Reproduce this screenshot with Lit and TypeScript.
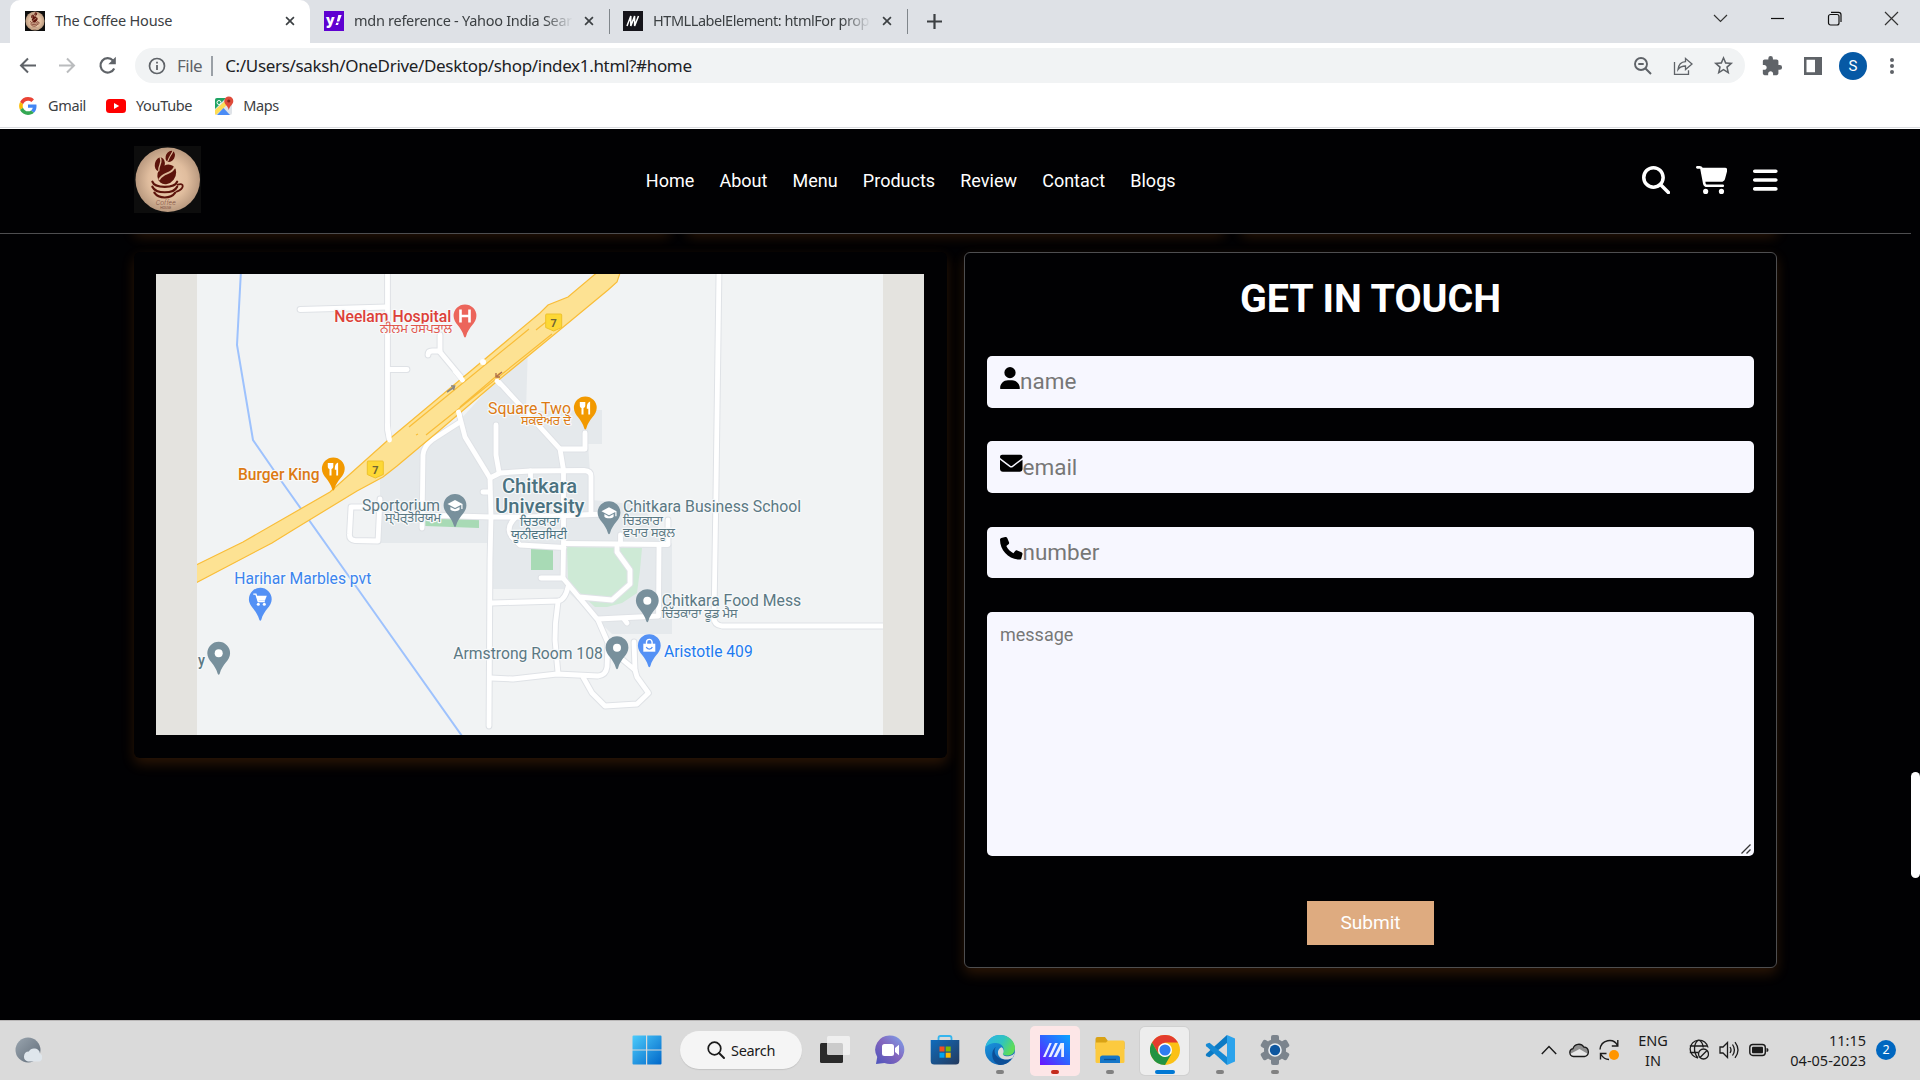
import { LitElement, html, css, svg } from "lit";
import { customElement } from "lit/decorators.js";

const closeIcon = html`<svg class="close" viewBox="0 0 12 12"><path d="M1.3 1.3 10.7 10.7M10.7 1.3 1.3 10.7" fill="none" stroke="#3c4043" stroke-width="2"/></svg>`;

const coffeeLogo = html`<svg class="logo" viewBox="0 0 68 68" preserveAspectRatio="none">
  <defs><radialGradient id="cg"><stop offset="0" stop-color="#efceb0"/><stop offset=".6" stop-color="#e0bd9e"/><stop offset="1" stop-color="#b9997f"/></radialGradient></defs>
  <rect width="68" height="68" fill="#0d0d0d"/>
  <circle cx="34" cy="34" r="32.5" fill="url(#cg)"/>
  <g fill="#5c130b">
    <ellipse cx="36.5" cy="10.5" rx="4.4" ry="6" transform="rotate(28 36.500 10.500)"/>
    <ellipse cx="26" cy="18.500" rx="5" ry="7" transform="rotate(12 26 18.500)"/>
    <ellipse cx="33" cy="28.500" rx="8.800" ry="10.500" transform="rotate(38 33 28.500)"/>
  </g>
  <g fill="none" stroke="#dcb898" stroke-linecap="round">
    <path d="M39 5.500C37 10 36 9.500 34 15.500" stroke-width="1.100"/>
    <path d="M26.500 12C29 17 24.500 19 25 25" stroke-width="1.300"/>
    <path d="M40.500 22C37 29 30 26 25.500 33.500" stroke-width="2"/>
  </g>
  <g fill="none" stroke="#5c130b" stroke-width="2.200" stroke-linecap="round">
    <path d="M18.500 36C21 43 41 43 43.500 36"/>
    <path d="M18.500 41C22 48.500 40 48.500 43.500 41"/>
    <path d="M20.500 47C25 53.500 37 53.500 41.500 47"/>
    <path d="M44 39C51 36.500 51 43 43 46" stroke-width="1.800"/>
  </g>
  <g fill="#7b4a3c" font-family="Roboto, sans-serif" text-anchor="middle">
    <text x="32" y="59" font-size="7.500" font-style="italic" font-weight="300" textLength="20" lengthAdjust="spacingAndGlyphs">Coffee</text>
    <text x="32" y="63.500" font-size="3.500">HOUSE</text>
  </g>
</svg>`;

@customElement("browser-bar")
class BrowserBar extends LitElement {
  static styles = css`
    :host { display: block; height: 129px; background: #fff; font: 14.5px "Noto Sans", "Open Sans", sans-serif; color: #3c4043; }
    svg { display: block; flex: none; }
    .strip { height: 43px; background: #dee1e6; display: flex; align-items: flex-end; }
    .tab { height: 43px; display: flex; align-items: center; box-sizing: border-box; padding: 0 16px 1px 14px; white-space: nowrap; }
    .active { width: 300px; margin-left: 10px; background: #fff; border-radius: 10px 10px 0 0; padding-left: 15px; }
    .tab .logo { width: 20px; height: 20px; }
    .fav { width: 20px; height: 20px; }
    .title { flex: 1; margin: 0 9px 2px 10px; letter-spacing: -0.22px; }
    .fade { -webkit-mask-image: linear-gradient(90deg, #000 86%, transparent 99%); mask-image: linear-gradient(90deg, #000 86%, transparent 99%); }
    .close { width: 10px; height: 10px; margin-right: -1px; }
    .second { width: 299px; }
    .second .title { letter-spacing: -0.28px; }
    .third { width: 297px; padding-left: 13px; }
    .third .title { letter-spacing: -0.45px; }
    .sep { width: 1px; height: 25px; background: #80868b; align-self: center; }
    .plus { width: 15px; height: 15px; margin: 0 0 14px 19px; }
    .win { margin-left: auto; display: flex; align-items: center; gap: 42px; padding: 0 21px 7px 0; height: 36px; }
    .win svg { width: 15px; height: 15px; }
    .tools { height: 35px; padding: 5px 0; display: flex; align-items: center; color: #5f6368; }
    .navs { width: 135px; display: flex; gap: 19px; padding-left: 17px; box-sizing: border-box; }
    .navs svg { width: 21px; height: 21px; }
    .omni { flex: none; width: 1610px; height: 35px; box-sizing: border-box; border-radius: 18px; background: #f1f3f4; display: flex; align-items: center; padding: 0 12px; }
    .omni svg { width: 20px; height: 20px; }
    .file { font-size: 17px; letter-spacing: -0.5px; margin: 0 9px 1px 10px; }
    .bar { width: 2px; height: 20px; background: #9aa0a6; }
    .url { font-size: 17px; letter-spacing: -0.33px; color: #202124; margin: 0 auto 1px 12px; }
    .omni .acts { display: flex; gap: 20px; }
    .omni .star { width: 23px; height: 23px; margin: -1.5px; }
    .right { display: flex; align-items: center; padding-left: 16px; gap: 19px; }
    .right svg { width: 22px; height: 22px; }
    .avatar { width: 28px; height: 28px; border-radius: 50%; background: #0659a5; color: #fff; font: 15px/28px Roboto, sans-serif; text-align: center; margin: 0 -2px 0 -4px; }
    .marks { height: 40px; box-sizing: border-box; padding: 0 0 4px 18px; border-bottom: 1px solid #dadce0; display: flex; align-items: center; }
    .marks svg { width: 20px; height: 20px; }
    .marks span { letter-spacing: -0.35px; margin: 0 20px 1px 10px; }
    .marks .yt { margin-right: 22px; }
    .marks .yt + svg { margin-right: -1px; }
  `;
  render() {
    return html`
      <div class="strip">
        <div class="tab active">${coffeeLogo}<span class="title">The Coffee House</span>${closeIcon}</div>
        <div class="tab second">
          <svg class="fav" viewBox="0 0 20 20"><rect width="20" height="20" fill="#5f01d1"/><text x="2" y="14" fill="#fff" font-family="Open Sans, sans-serif" font-weight="800" font-size="14">y</text><path d="M14.300 4h3.400l-2.400 6.500h-2.500zM12.300 11.700h2.500l-.8 2.300h-2.500z" fill="#fff"/></svg>
          <span class="title fade">mdn reference - Yahoo India Sear</span>${closeIcon}
        </div>
        <div class="sep"></div>
        <div class="tab third">
          <svg class="fav" viewBox="0 0 20 20"><rect width="20" height="20" fill="#15141a"/><path d="M4 15 7.800 5V15L11.600 5V15L15.500 5" fill="none" stroke="#fff" stroke-width="1.500"/></svg>
          <span class="title fade">HTMLLabelElement: htmlFor prop</span>${closeIcon}
        </div>
        <div class="sep"></div>
        <svg class="plus" viewBox="0 0 15 15"><path d="M7.500 0v15M0 7.500h15" stroke="#3c4043" stroke-width="2.200"/></svg>
        <div class="win">
          <svg viewBox="0 0 15 15"><path d="m1 4 6.500 6.500L14 4" fill="none" stroke="#333" stroke-width="1.200"/></svg>
          <svg viewBox="0 0 15 15"><path d="M1 7.500h13" stroke="#111" stroke-width="1.200"/></svg>
          <svg viewBox="0 0 15 15"><rect x="1.500" y="3.500" width="10.500" height="10.500" rx="2" fill="none" stroke="#111" stroke-width="1.200"/><path d="M4 1.300h7.500a2.500 2.500 0 0 1 2.500 2.500V11" fill="none" stroke="#111" stroke-width="1.200"/></svg>
          <svg viewBox="0 0 15 15"><path d="m1 1 13 13M14 1 1 14" stroke="#333" stroke-width="1.200"/></svg>
        </div>
      </div>
      <div class="tools">
        <div class="navs">
          <svg viewBox="0 0 21 21"><path d="M19 10.500H4M11 3.500l-7 7 7 7" fill="none" stroke="#5f6368" stroke-width="2"/></svg>
          <svg viewBox="0 0 21 21"><path d="M2 10.500h15M10 3.500l7 7-7 7" fill="none" stroke="#babcbe" stroke-width="2"/></svg>
          <svg viewBox="0 0 21 21"><path d="M17.200 13.500A7.200 7.200 0 1 1 16 5.500" fill="none" stroke="#5f6368" stroke-width="2.200"/><path d="M18.800 1.800v7.500h-7.500z" fill="#5f6368"/></svg>
        </div>
        <div class="omni">
          <svg viewBox="0 0 20 20"><circle cx="10" cy="10" r="7.500" fill="none" stroke="#5f6368" stroke-width="1.700"/><path d="M10 9v5M10 5.800v1.800" stroke="#5f6368" stroke-width="1.800"/></svg>
          <span class="file">File</span><span class="bar"></span>
          <span class="url">C:/Users/saksh/OneDrive/Desktop/shop/index1.html?#home</span>
          <div class="acts">
            <svg viewBox="0 0 20 20"><circle cx="8" cy="8" r="6" fill="none" stroke="#5f6368" stroke-width="1.900"/><path d="m12.500 12.500 5.500 5.500M5.300 8h5.400" stroke="#5f6368" stroke-width="2"/></svg>
            <svg viewBox="0 0 20 20"><path d="M1.500 6v12.300h14v-4" fill="none" stroke="#5f6368" stroke-width="1.300"/><path d="M12.500 2.500 19 8l-6.500 5.500V10C9 10 6.800 11 5 13.500 5.500 9 8 6 12.500 5.700z" fill="none" stroke="#5f6368" stroke-width="1.300"/></svg>
            <svg class="star" viewBox="0 0 24 24"><path fill="#5f6368" d="m22 9.240-7.190-.62L12 2 9.190 8.630 2 9.240l5.460 4.730L5.820 21 12 17.270 18.180 21l-1.630-7.030L22 9.240zM12 15.400l-3.760 2.270 1-4.280-3.320-2.880 4.380-.38L12 6.100l1.710 4.040 4.380.38-3.320 2.880 1 4.280L12 15.400z"/></svg>
          </div>
        </div>
        <div class="right">
          <svg viewBox="0 0 24 24"><path fill="#5f6368" d="M20.500 11H19V7c0-1.100-.9-2-2-2h-4V3.500a2.500 2.500 0 0 0-5 0V5H4c-1.100 0-1.990.9-1.990 2v3.800H3.500c1.490 0 2.700 1.210 2.700 2.700s-1.210 2.700-2.700 2.700H2V20c0 1.100.9 2 2 2h3.800v-1.500c0-1.490 1.210-2.700 2.700-2.700s2.700 1.210 2.700 2.700V22H17c1.100 0 2-.9 2-2v-4h1.500a2.500 2.500 0 0 0 0-5z"/></svg>
          <svg viewBox="0 0 22 22"><path fill="#5f6368" fill-rule="evenodd" d="M2 2h18v18H2zM4.500 4.800v12.400h8.500V4.800z"/></svg>
          <span class="avatar">S</span>
          <svg viewBox="0 0 22 22"><g fill="#5f6368"><circle cx="8" cy="5" r="2"/><circle cx="8" cy="11" r="2"/><circle cx="8" cy="17" r="2"/></g></svg>
        </div>
      </div>
      <div class="marks">
        <svg viewBox="-3 -3 54 54"><path fill="#EA4335" d="M24 9.500c3.540 0 6.710 1.220 9.210 3.600l6.850-6.850C35.900 2.380 30.470 0 24 0 14.620 0 6.510 5.380 2.560 13.220l7.980 6.190C12.430 13.720 17.740 9.500 24 9.500z"/><path fill="#4285F4" d="M46.980 24.550c0-1.570-.15-3.090-.38-4.550H24v9.020h12.940c-.58 2.960-2.260 5.480-4.780 7.180l7.730 6c4.510-4.180 7.090-10.360 7.090-17.650z"/><path fill="#FBBC05" d="M10.530 28.590c-.48-1.450-.76-2.990-.76-4.590s.27-3.140.76-4.590l-7.980-6.190C.92 16.460 0 20.120 0 24c0 3.880.92 7.540 2.560 10.780l7.970-6.190z"/><path fill="#34A853" d="M24 48c6.480 0 11.930-2.130 15.890-5.810l-7.730-6c-2.150 1.450-4.920 2.300-8.160 2.300-6.260 0-11.570-4.220-13.470-9.910l-7.980 6.190C6.510 42.620 14.620 48 24 48z"/></svg>
        <span>Gmail</span>
        <svg viewBox="0 0 20 20"><rect y="3" width="20" height="14" rx="3.500" fill="#f00"/><path d="m8 7 5.200 3L8 13z" fill="#fff"/></svg>
        <span class="yt">YouTube</span>
        <svg viewBox="0 0 20 20"><rect x="1" y="2" width="17" height="17" rx="2" fill="#dfe3e8"/><path d="M3 2h9L1 13V4a2 2 0 0 1 2-2z" fill="#1fa463"/><path d="M1 14 13 3l3 3L2 19l-1-1z" fill="#fddc54"/><path d="M9.500 12 16 19H3z" fill="#4b8cf5"/><path d="M14.800.5a4.500 4.500 0 0 1 4.500 4.500c0 3.500-3.500 4.500-4.500 9-1-4.500-4.500-5.500-4.500-9a4.500 4.500 0 0 1 4.500-4.500z" fill="#df4b3a"/><circle cx="14.800" cy="5" r="1.600" fill="#8c2619"/><circle cx="5" cy="6.500" r="2" fill="none" stroke="#fff"/></svg>
        <span>Maps</span>
      </div>`;
  }
}

type Pin = { x: number; y: number; color: string; glyph: string };
type Label = { x: number; y: number; w: number; text: string; color: string; size?: number; weight?: number };

const SLATE = "#5b7883";
const pins: Pin[] = [
  { x: 465, y: 316, color: "#ec655b", glyph: "hospital" },
  { x: 585.3, y: 408, color: "#f29900", glyph: "food" },
  { x: 333.3, y: 469, color: "#f29900", glyph: "food" },
  { x: 455, y: 505.5, color: "#78909c", glyph: "school" },
  { x: 609, y: 512.7, color: "#78909c", glyph: "school" },
  { x: 647.3, y: 600.7, color: "#78909c", glyph: "dot" },
  { x: 617, y: 647.7, color: "#78909c", glyph: "dot" },
  { x: 649.3, y: 645.7, color: "#5491f5", glyph: "bag" },
  { x: 260.3, y: 599.3, color: "#5491f5", glyph: "cart" },
  { x: 218.7, y: 653.3, color: "#78909c", glyph: "dot" },
];
const glyphs: Record<string, unknown> = {
  hospital: svg`<path d="M-4.500-6.500v13M4.500-6.500v13M-4.500 0h9" stroke="#fff" stroke-width="2.600" fill="none"/>`,
  food: svg`<path d="M-5.500-6H0v3.500c0 1.600-1 2.300-1.800 2.500V6.500h-2V0c-.9-.2-1.700-1-1.700-2.500zM1.500-1c0-3 1.500-5 3.300-5.500v13h-1.800V.8H1.500z" fill="#fff"/>`,
  school: svg`<path d="M0-5.500 7.500-1.500V3.500H6.300V-.8L0 2.600-7.500-1.500zM-4.600 1.400 0 3.800 4.600 1.400V4C3 6.200-3 6.200-4.600 4z" fill="#fff"/>`,
  dot: svg`<circle r="4" fill="#fff"/>`,
  bag: svg`<path d="M-6-2H6V6H-6z" fill="#fff"/><path d="M-2.800-1.500v-2a2.800 2.800 0 0 1 5.600 0v2" fill="none" stroke="#fff" stroke-width="1.400"/><path d="M-3 1.300C-2 4 2 4 3 1.300" fill="none" stroke="#5491f5" stroke-width="1.300"/>`,
  cart: svg`<path d="M-7-5.200h2.600L-2 2.300H4.500" fill="none" stroke="#fff" stroke-width="1.400"/><path d="M-4-3.500H6.500L4.500 1.500H-2.500z" fill="#fff"/><circle cx="-2" cy="5" r="1.500" fill="#fff"/><circle cx="4" cy="5" r="1.500" fill="#fff"/>`,
};
const labels: Label[] = [
  { x: 334.3, y: 321.8, w: 117, text: "Neelam Hospital", color: "#dd4038", weight: 500 },
  { x: 380, y: 333.3, w: 72, text: "ਨੀਲਮ ਹਸਪਤਾਲ", color: "#e0564e", size: 12 },
  { x: 488, y: 414, w: 83, text: "Square Two", color: "#dd7a13" },
  { x: 521, y: 425, w: 50, text: "ਸਕਵੇਅਰ ਦੋ", color: "#dd7a13", size: 12 },
  { x: 238, y: 480.3, w: 81.5, text: "Burger King", color: "#dd7a13", weight: 500 },
  { x: 362, y: 510.5, w: 78, text: "Sportorium", color: SLATE },
  { x: 385, y: 522, w: 56, text: "ਸ੍ਪੋਰ੍ਤੋਰਿਯਮ", color: SLATE, size: 12 },
  { x: 502, y: 492.7, w: 75, text: "Chitkara", color: "#4b7280", size: 19.5, weight: 500 },
  { x: 495, y: 513, w: 89.5, text: "University", color: "#4b7280", size: 19.5, weight: 500 },
  { x: 520, y: 526, w: 39.5, text: "ਚਿਤਕਾਰਾ", color: "#4b7280", size: 12 },
  { x: 511, y: 538.5, w: 56, text: "ਯੂਨੀਵਰਸਿਟੀ", color: "#4b7280", size: 12 },
  { x: 623, y: 511.7, w: 178, text: "Chitkara Business School", color: SLATE },
  { x: 623, y: 524.5, w: 40, text: "ਚਿਤਕਾਰਾ", color: SLATE, size: 12 },
  { x: 623, y: 537, w: 52, text: "ਵਪਾਰ ਸਕੂਲ", color: SLATE, size: 12 },
  { x: 661.7, y: 606.3, w: 139.5, text: "Chitkara Food Mess", color: SLATE },
  { x: 661.7, y: 618, w: 76, text: "ਚਿੱਤਕਾਰਾ ਫੂਡ ਮੈਸ", color: SLATE, size: 12 },
  { x: 453.3, y: 659, w: 149.5, text: "Armstrong Room 108", color: SLATE },
  { x: 664, y: 657, w: 88.7, text: "Aristotle 409", color: "#1f7bf0" },
  { x: 234.3, y: 583.7, w: 137, text: "Harihar Marbles pvt", color: "#3b84ee" },
  { x: 198, y: 665.5, w: 7, text: "y", color: SLATE, weight: 500 },
];
const roads = [
  "M387.500 270V430L389.500 440", "M300 309.500 387 307", "M388 369.500H407",
  "M440 335V352L462.500 379", "M428 355Q428 351 432 351H440",
  "M497 380 520 405 560 449 563.500 470V547L563 578", "M560 449H585V433",
  "M458.500 412 465 437 490 478 491 517 490 560 489 726", "M460 422 432 440Q424 446 423 455L422 528",
  "M496 425V455L499 472", "M490 478 500 473 530 471 584 470.500Q591 471 591 476V514",
  "M403 514.500 491 517 530 517 605 514", "M380 499 378 541 355 540.500Q349 540 349.500 534L351 507H379",
  "M515 518Q505 528 512 537L520 545 564 547.500", "M564 543.500 668 544.500V520", "M620.500 535V544",
  "M617 545V552L630 570V584L612 600 579 597", "M541 578H563L598 620 608 643 607 667Q606 675 598 676L557 674 513 679 491 678",
  "M492 603 558 601Q565 600 568 587", "M558 602 555.500 623 555 640 558 673", "M659 547 658.500 616 598 619", "M624 619 627 623",
  "M623 660 635 670 634 642", "M635 670 637 677 648.500 693 637 704 605 706 592 693 583 677",
  "M719 270 716 490 714 618Q714 625 722 626H890", "M483 492H490", "M530.500 471V480",
];

@customElement("area-map")
class AreaMap extends LitElement {
  static styles = css`
    :host { display: block; height: 461px; }
    svg { display: block; width: 768px; height: 461px; }
    .lbl { font-family: Roboto, "Noto Sans Gurmukhi", "Noto Sans", sans-serif; paint-order: stroke; stroke: #f7f9fa; stroke-width: 2.4px; stroke-linejoin: round; }
    .case { fill: none; stroke: #dfe2e6; stroke-width: 6.8px; stroke-linecap: round; stroke-linejoin: round; }
    .road { fill: none; stroke: #fff; stroke-width: 4.8px; stroke-linecap: round; stroke-linejoin: round; }
  `;
  render() {
    return html`<svg viewBox="156 274 768 461">
      <rect x="156" y="274" width="768" height="461" fill="#f1f3f4"/>
      <path d="M528 345 526 411 602 410V444H588L592 500 640 505 672 544V634H612L565 589H490V543H380V476L460 420z" fill="#e5e9ec"/>
      <path d="M567 547 642 548 640 570 637 593 622 603 607 607H595L580 593 568 580z" fill="#ceead6"/>
      <path d="M531 549H553V570H531zM425 518 479 519V528L425 526z" fill="#a8dab5"/>
      <path d="M241 270 237 345 253 440 282 482 355 585 462 736" fill="none" stroke="#9ec2fd" stroke-width="2"/>
      ${roads.map((d) => svg`<path class="case" d="${d}"/>`)}
      ${roads.map((d) => svg`<path class="road" d="${d}"/>`)}
      <path d="M190 568 243 542 330 492 387 441 540 313 548 305 568 297 600 270H621L617 282 608 290 550 338 495 383 440 430 397 466 383 477 357 491 293 530 272 543 190 586z" fill="#fde293" stroke="#f9bd38" stroke-width="1.200"/>
      <path d="M409 427 529 329M426 435 552 334M536 330 546 322M416 435l2-1M460 407 500 373" fill="none" stroke="#f9bd38" stroke-width="1.200"/>
      <path class="road" d="M387.500 425 389.500 440M455 371l7.500 9M497 381l3 3M458.500 412l1 4"/>
      <circle cx="483" cy="362" r="3" fill="#fff"/>
      <path d="m447 392 7-5m-3-1 3.500 0-1 4" stroke="#8a8784" stroke-width="1.600" fill="none"/>
      <path d="m502 372-6 5m0-4v4h4" stroke="#b0714c" stroke-width="1.400" fill="none"/>
      ${[[375.3, 469], [553.7, 322]].map(([x, y]) => svg`<g transform="translate(${x} ${y})"><path d="M-7-8H7Q8-8 8-7V5.500L0 9-8 5.500V-7Q-8-8-7-8z" fill="#fdd835" stroke="#eec22c"/><text y="4.500" text-anchor="middle" font-family="Roboto, sans-serif" font-weight="700" font-size="11" fill="#6f6536">7</text></g>`)}
      ${pins.map((p) => svg`<g transform="translate(${p.x} ${p.y})"><path d="M0-11.500A11.400 11.400 0 0 1 11.400 0C11.400 7.500 3.500 10.500 1 20.500Q0 22.500-1 20.500C-3.500 10.500-11.400 7.500-11.400 0A11.400 11.400 0 0 1 0-11.500z" fill="${p.color}"/>${glyphs[p.glyph]}</g>`)}
      ${labels.map((l) => svg`<text class="lbl" x="${l.x}" y="${l.y}" textLength="${l.w}" lengthAdjust="spacingAndGlyphs" font-size="${l.size ?? 15.8}" font-weight="${l.weight ?? 400}" fill="${l.color}">${l.text}</text>`)}
      <path d="M156 274h41v461h-41zM883 274h41v461h-41z" fill="#e4e3df"/>
    </svg>`;
  }
}

const fieldIcons = {
  user: html`<svg width="20" height="22.500" viewBox="0 0 448 512"><path d="M224 256A128 128 0 1 0 224 0a128 128 0 1 0 0 256zm-45.700 48C79.800 304 0 383.800 0 482.300 0 498.700 13.300 512 29.700 512H418.300c16.400 0 29.700-13.300 29.700-29.700 0-98.500-79.800-178.300-178.300-178.300H178.300z"/></svg>`,
  mail: html`<svg width="22.500" height="22.500" viewBox="0 0 512 512"><path d="M48 64C21.500 64 0 85.500 0 112c0 15.100 7.100 29.300 19.200 38.400L236.800 313.600c11.400 8.500 27 8.500 38.400 0L492.800 150.400c12.100-9.100 19.200-23.300 19.200-38.400 0-26.500-21.500-48-48-48H48zM0 176V384c0 35.300 28.700 64 64 64H448c35.300 0 64-28.700 64-64V176L294.400 339.200c-22.800 17.100-54 17.100-76.800 0L0 176z"/></svg>`,
  phone: html`<svg width="22.500" height="22.500" viewBox="0 0 512 512"><path d="M164.900 24.600c-7.700-18.600-28-28.500-47.400-23.200l-88 24C12.100 30.200 0 46 0 64 0 311.400 200.600 512 448 512c18 0 33.800-12.100 38.600-29.500l24-88c5.300-19.400-4.600-39.700-23.200-47.400l-96-40c-16.300-6.800-35.200-2.100-46.300 11.600L304.700 368C234.300 334.700 177.300 277.700 144 207.300L193.300 167c13.700-11.200 18.400-30 11.600-46.300l-40-96z"/></svg>`,
};

@customElement("coffee-page")
class CoffeePage extends LitElement {
  static styles = css`
    :host { display: flex; height: 891px; background: #010103; font-family: Roboto, sans-serif; color: #fff; }
    svg { display: block; flex: none; }
    .main { width: 1911px; overflow: hidden; }
    .head { height: 105px; box-sizing: border-box; border-bottom: 1px solid #4e4e50; padding: 0 133px 2px 133.8px; display: flex; align-items: center; position: relative; z-index: 1; background: #010103; }
    .logo { width: 67.5px; height: 67.5px; margin-bottom: 1px; }
    .nav { display: flex; gap: 25.2px; margin-left: 444.5px; font-size: 18px; }
    .icons { display: flex; align-items: center; gap: 26px; margin-left: auto; }
    .above { display: grid; grid-template-columns: repeat(3, 1fr); gap: 17px; padding: 0 134px; height: 0; }
    .prev { height: 40px; margin-top: -43px; border-radius: 5px; }
    .glow, .prev { box-shadow: 0 5.6px 12.5px rgba(255, 128, 26, 0.17); }
    .row { display: grid; grid-template-columns: 813px 813px; gap: 17px; padding: 18px 134px 0; align-items: start; position: relative; }
    .card { background: #010103; border-radius: 6px; box-sizing: border-box; }
    .place { padding: 22px; height: 506px; }
    .form { height: 716px; border: 1px solid #4e4e50; padding: 23px 22px 22px; display: flex; flex-direction: column; align-items: center; }
    h3 { margin: 0 0 35px; font-size: 39.4px; line-height: 45px; font-weight: 700; }
    .field { align-self: stretch; height: 52px; margin-bottom: 33.3px; background: #f7f7ff; border-radius: 5px; display: flex; box-sizing: border-box; padding: 10.5px 13px 0; color: #777; font-size: 22.5px; line-height: 29px; }
    .mail { line-height: 30px; }
    .tel { height: 51.5px; margin-bottom: 33.8px; line-height: 30px; }
    .msg { height: 244px; margin-bottom: 45px; font-size: 18px; line-height: 21px; padding-top: 12px; justify-content: space-between; }
    .grip { align-self: flex-end; margin: 0 -10px 2px 0; }
    .btn { width: 127px; height: 44px; background: #deab80; font-size: 19.1px; line-height: 44px; text-align: center; }
    .track { flex: 1; display: flex; flex-direction: column; }
    .thumb { height: 106px; margin-top: 643px; background: #fff; border-radius: 5px; }
  `;
  render() {
    return html`
      <div class="main">
        <div class="head">
          ${coffeeLogo}
          <div class="nav">${["Home", "About", "Menu", "Products", "Review", "Contact", "Blogs"].map((t) => html`<span>${t}</span>`)}</div>
          <div class="icons">
            <svg width="28.200" height="28.200" viewBox="0 0 512 512"><path fill="#fff" d="M416 208c0 45.900-14.900 88.300-40 122.700L502.600 457.400c12.500 12.500 12.500 32.800 0 45.300s-32.800 12.500-45.300 0L330.700 376c-34.400 25.200-76.800 40-122.700 40C93.100 416 0 322.900 0 208S93.100 0 208 0S416 93.100 416 208zM208 352a144 144 0 1 0 0-288 144 144 0 1 0 0 288z"/></svg>
            <svg width="31.600" height="28.200" viewBox="0 0 576 512"><path fill="#fff" d="M0 24C0 10.700 10.700 0 24 0H69.500c22 0 41.500 12.800 50.600 32h411c26.300 0 45.500 25 38.600 50.400l-41 152.300c-8.500 31.400-37 53.300-69.500 53.300H170.700l5.400 28.500c2.200 11.300 12.100 19.500 23.600 19.500H488c13.300 0 24 10.700 24 24s-10.700 24-24 24H199.700c-34.600 0-64.300-24.600-70.700-58.500L77.400 54.500c-.7-3.800-4-6.500-7.900-6.500H24C10.700 48 0 37.300 0 24zM128 464a48 48 0 1 1 96 0 48 48 0 1 1 -96 0zm336-48a48 48 0 1 1 0 96 48 48 0 1 1 0-96z"/></svg>
            <svg width="24.600" height="28.200" viewBox="0 0 448 512"><path fill="#fff" d="M0 96C0 78.300 14.300 64 32 64H416c17.700 0 32 14.300 32 32s-14.300 32-32 32H32C14.300 128 0 113.700 0 96zM0 256c0-17.700 14.300-32 32-32H416c17.700 0 32 14.300 32 32s-14.300 32-32 32H32c-17.700 0-32-14.300-32-32zM448 416c0 17.700-14.300 32-32 32H32c-17.700 0-32-14.300-32-32s14.300-32 32-32H416c17.700 0 32 14.300 32 32z"/></svg>
          </div>
        </div>
        <div class="above"><div class="prev"></div><div class="prev"></div><div class="prev"></div></div>
        <div class="row">
          <div class="card glow place"><area-map></area-map></div>
          <div class="card glow form">
            <h3>GET IN TOUCH</h3>
            <div class="field">${fieldIcons.user}<span>name</span></div>
            <div class="field mail">${fieldIcons.mail}<span>email</span></div>
            <div class="field tel">${fieldIcons.phone}<span>number</span></div>
            <div class="field msg"><span>message</span><svg class="grip" width="10" height="10" viewBox="0 0 10 10"><path d="M.5 9.500 9.500.5M5.500 9.500l4-4" stroke="#333" stroke-width="1.300"/></svg></div>
            <div class="btn">Submit</div>
          </div>
        </div>
      </div>
      <div class="track"><div class="thumb"></div></div>`;
  }
}

@customElement("task-bar")
class TaskBar extends LitElement {
  static styles = css`
    :host { display: flex; height: 60px; box-sizing: border-box; border-top: 1px solid #b9b7b7; background: #dadada; align-items: center; font: 14.5px "Noto Sans", "Open Sans", sans-serif; color: #1b1b1b; }
    svg { display: block; flex: none; }
    .weather { width: 28px; height: 28px; margin: 0 0 2px 14px; }
    .apps { display: flex; align-items: center; margin-left: 579px; }
    .app { width: 55px; height: 60px; display: flex; flex-direction: column; align-items: center; justify-content: center; position: relative; }
    .app svg { width: 30px; height: 30px; position: relative; margin-bottom: 1px; }
    .first { width: 51px; }
    .pill { width: 122px; height: 38px; margin: 0 5px 1px 8px; border-radius: 19px; background: #f5f5f5; display: flex; align-items: center; box-sizing: border-box; padding-left: 27px; gap: 6px; box-shadow: 0 1px 1px #c4c4c4; letter-spacing: -0.3px; }
    .tile::before { content: ""; position: absolute; inset: 6px 3px 6px 3px; border-radius: 5px; background: #ededed; box-shadow: 0 0 0 1px #d0d0d0; }
    .pink::before { background: #fde6e7; box-shadow: none; inset: 5px 2.5px; }
    .dot { position: absolute; bottom: 7px; width: 8px; height: 4px; border-radius: 2px; background: #818181; }
    .red { background: #c42b1c; }
    .blue { background: #0078d4; width: 20px; }
    .tray { margin-left: auto; display: flex; align-items: center; padding-bottom: 2px; }
    .stack { line-height: 20px; white-space: pre; }
    .cloud { margin-left: 12px; }
    .gap { margin-left: 10px; }
    .lang { text-align: center; width: 34px; margin: 0 19px 0 16px; }
    .time { text-align: right; width: 90px; margin-left: 7px; }
    .badge { width: 20px; height: 20px; border-radius: 50%; background: #0067c0; color: #fff; font-size: 12.5px; line-height: 20px; text-align: center; margin: 0 24px 0 10px; }
  `;
  render() {
    return html`
      <svg class="weather" viewBox="0 0 28 28"><defs><linearGradient id="wm" x1="0" y1="0" x2="1" y2="1"><stop stop-color="#9aa5af"/><stop offset="1" stop-color="#5f6b77"/></linearGradient></defs><circle cx="14" cy="14" r="12.500" fill="url(#wm)"/><path d="M14 25.500a5 5 0 0 1 .8-9.900 6 6 0 0 1 11.200 2A4.200 4.200 0 0 1 24 25.500z" fill="#dfe6ec"/></svg>
      <div class="apps">
        <div class="app first"><svg viewBox="0 0 30 30"><defs><linearGradient id="w" x1="0" y1="0" x2="1" y2="1"><stop stop-color="#4ccbfb"/><stop offset="1" stop-color="#0167c9"/></linearGradient></defs><path d="M1.500.5H14v14H.5v-13q0-1 1-1zM15.200.5h13.300q1 0 1 1v13H15.200zM.5 15.600H14v14H1.500q-1 0-1-1zM15.200 15.600h14.300v13q0 1-1 1H15.200z" fill="url(#w)"/></svg></div>
        <div class="pill"><svg width="18" height="18" viewBox="0 0 18 18"><circle cx="7.500" cy="7.500" r="6.300" fill="none" stroke="#1b1b1b" stroke-width="1.700"/><path d="m12 12 5 5" stroke="#1b1b1b" stroke-width="1.900" stroke-linecap="round"/></svg>Search</div>
        <div class="app"><svg viewBox="0 0 30 30"><rect y="8" width="23" height="20" rx="1.500" fill="#2a2a2a"/><rect x="7" y="1" width="23" height="19" rx="1.500" fill="#f4f4f4" opacity=".8"/></svg></div>
        <div class="app"><svg viewBox="0 0 30 30"><defs><linearGradient id="t" x1="1" y1="0" x2="0" y2="1"><stop stop-color="#7ea6ee"/><stop offset=".5" stop-color="#8365bd"/><stop offset="1" stop-color="#4b53bc"/></linearGradient></defs><path d="M15 .5A14.300 14.300 0 1 1 9.500 28L1 29 2.200 22A14.300 14.300 0 0 1 15 .5z" fill="url(#t)"/><rect x="7" y="9" width="12" height="12" rx="2.500" fill="#fff"/><path d="m20 13 4-3.200v10.400L20 17z" fill="#fff"/></svg></div>
        <div class="app"><svg viewBox="0 0 30 30"><defs><linearGradient id="s" x1="0" y1="0" x2="1" y2="1"><stop stop-color="#0f6cbd"/><stop offset="1" stop-color="#243a5e"/></linearGradient></defs><path d="M8.500 7V3q0-2 2-2h9q2 0 2 2v4" fill="none" stroke="#35b5ee" stroke-width="1.800"/><path d="M.7 5h28.600v21q0 3.500-3.500 3.500H4.200Q.7 29.500.7 26z" fill="url(#s)"/><path d="M9.500 11.500h5v5h-5z" fill="#f25022"/><path d="M15.700 11.500h5v5h-5z" fill="#7fba00"/><path d="M9.500 17.700h5v5h-5z" fill="#00a4ef"/><path d="M15.700 17.700h5v5h-5z" fill="#ffb900"/></svg></div>
        <div class="app"><svg viewBox="0 0 30 30"><defs><linearGradient id="e1" x1="0" y1="0" x2="1" y2=".4"><stop stop-color="#2db4e8"/><stop offset=".6" stop-color="#2fc3c0"/><stop offset="1" stop-color="#5ddc5a"/></linearGradient><linearGradient id="e2" x1="0" y1="0" x2=".6" y2="1"><stop stop-color="#1b9fe6"/><stop offset="1" stop-color="#1163b4"/></linearGradient></defs><circle cx="15" cy="15" r="15" fill="url(#e2)"/><path d="M.3 12.500C2 4.500 8 0 15 0c9 0 15 6.500 15 13 0 5-3.500 7.500-7.500 7.500-4 0-5.500-1.500-5-2.500 1-1.200 1.200-2 1.200-3.500C18.700 11 15.500 8 11 8 6 8 2 10 .3 12.500z" fill="url(#e1)"/><path d="M11 12C8 15 9.500 24 20 24.500c3 .1 5-.8 7-2C25 27 20 30 15.500 30 7 29 4.500 16 11 12z" fill="#0d4f97"/><path d="M18 18.500c-1 1.500 3 4.500 9.500 1.500l2.300-2-1.800 4.500C22 27 12 24 13 16.500c.4-2 2-4 3.700-4.300 2 1.300 2.600 4.300 1.300 6.300z" fill="#dadada"/></svg><span class="dot"></span></div>
        <div class="app tile pink"><svg viewBox="0 0 30 30"><defs><linearGradient id="m" x1="0" y1="1" x2="1" y2="0"><stop stop-color="#6a12ff"/><stop offset=".5" stop-color="#2f62ff"/><stop offset="1" stop-color="#0aa5ff"/></linearGradient></defs><rect width="30" height="30" fill="url(#m)"/><path d="m3 22 6.500-14h2.300L5.500 22zM8.500 22 15 8h2.800l-6.500 14zM13.500 22 20.500 8H24v14h-2.800V13L16.500 22z" fill="#e9efff"/></svg><span class="dot red"></span></div>
        <div class="app"><svg viewBox="0 0 30 30"><path d="M.5 4q0-2 2-2H10l3 4h15q1.500 0 1.500 2v6H.5z" fill="#d9a215"/><path d="M.5 7.500H11L13 5.500h15q1.500 0 1.500 1.500v19.500q0 1.500-1.500 1.500H2Q.5 28 .5 26.500z" fill="#fcca3f"/><path d="M5 28v-5q0-2.500 2.500-2.500h15Q25 20.500 25 23v5z" fill="#1576c8"/><path d="M9 24.500h12" stroke="#0a4f94" stroke-width="1.300"/></svg><span class="dot"></span></div>
        <div class="app tile"><svg viewBox="0 0 30 30"><circle cx="15" cy="15" r="15" fill="#fbc116"/><path d="M2 7.500A15 15 0 0 1 28 7.500H15L8.500 11.200V18.700z" fill="#e33b2e"/><path d="M2 7.500 8.500 18.700 14 22l7.500-3.300L15 30A15 15 0 0 1 2 7.500z" fill="#229342"/><circle cx="15" cy="15" r="7" fill="#fff"/><circle cx="15" cy="15" r="5.600" fill="#2f7df1"/></svg><span class="dot blue"></span></div>
        <div class="app"><svg viewBox="0 0 30 30"><path d="M22 0 30 3.500v23L22 30z" fill="#2ba3ec"/><path d="M22 0v8L4.500 22.300 1.500 21.200Q0 20 1.300 18.800z" fill="#0b7ac4"/><path d="M22 30v-8L4.500 7.700 1.500 8.800Q0 10 1.300 11.200z" fill="#1589d4"/></svg><span class="dot"></span></div>
        <div class="app"><svg viewBox="0 0 30 30"><g fill="#7b848d"><circle cx="15" cy="15" r="11"/>${[0, 60, 120].map((a) => svg`<rect x="11" y="0" width="8" height="30" rx="2" transform="rotate(${a} 15 15)"/>`)}</g><circle cx="15" cy="15" r="6.800" fill="#e9eef2"/><circle cx="15" cy="15" r="5.200" fill="#0d569f"/></svg><span class="dot"></span></div>
      </div>
      <div class="tray">
        <svg width="16" height="10" viewBox="0 0 16 10"><path d="m.8 9 7.200-7.500L15.200 9" fill="none" stroke="#1b1b1b" stroke-width="1.400"/></svg>
        <svg class="cloud" width="20" height="16" viewBox="0 0 20 16"><path d="M4.500 14.500A4 4 0 0 1 4 6.600 6 6 0 0 1 14.800 5 4.800 4.800 0 0 1 15.500 14.500z" fill="#8f8f8f"/><path d="M1 12 10.500 7l8.500 5q-1 2.500-3.500 2.500h-11Q2 14.500 1 12z" fill="#e8e8e8"/><path d="M4.500 14.500A4 4 0 0 1 4 6.600 6 6 0 0 1 14.800 5 4.800 4.800 0 0 1 15.500 14.500z" fill="none" stroke="#1b1b1b" stroke-width="1.300"/></svg>
        <svg class="gap" width="21" height="22" viewBox="0 0 21 22"><path d="M1 10.500C2 .5 14.500-1.500 18.500 6.500M18.800 1v6h-6M1.500 20.500v-6h6M2 15.500q3 5 8 5" fill="none" stroke="#1b1b1b" stroke-width="1.400"/><circle cx="15" cy="16" r="5" fill="#ff9500"/></svg>
        <div class="stack lang">ENG
IN</div>
        <svg width="20" height="21" viewBox="0 0 20 21"><g fill="none" stroke="#1b1b1b" stroke-width="1.300"><path d="M19 8.500A9 9 0 1 0 9 19M.8 7h18M.8 13.500H9M9 19C3.500 13 5 3 10 1c2.500 1.500 4 4.500 4.200 7.500"/><circle cx="14.500" cy="15" r="5"/><path d="m11 18.500 7-7"/></g></svg>
        <svg class="gap" width="20" height="18" viewBox="0 0 20 18"><path d="M1 6v6h3l4.500 4.500v-15L4 6zM11 6q2 3 0 6M13.500 3.500q3.800 5.500 0 11M16 1.200q6 7.800 0 15.600" fill="none" stroke="#1b1b1b" stroke-width="1.300"/></svg>
        <svg class="gap" width="20" height="14" viewBox="0 0 20 14"><rect x=".8" y="1.500" width="15.500" height="11" rx="3" fill="none" stroke="#1b1b1b" stroke-width="1.400"/><rect x="3" y="3.800" width="11" height="6.400" rx="1" fill="#1b1b1b"/><path d="M17.500 5q2 0 2 2t-2 2z" fill="#1b1b1b"/></svg>
        <div class="stack time">11:15
04-05-2023</div>
        <div class="badge">2</div>
      </div>`;
  }
}

@customElement("app-root")
class AppRoot extends LitElement {
  static styles = css`
    :host { display: flex; flex-direction: column; width: 1920px; height: 1080px; overflow: hidden; }
  `;
  render() {
    return html`<browser-bar></browser-bar><coffee-page></coffee-page><task-bar></task-bar>`;
  }
}
